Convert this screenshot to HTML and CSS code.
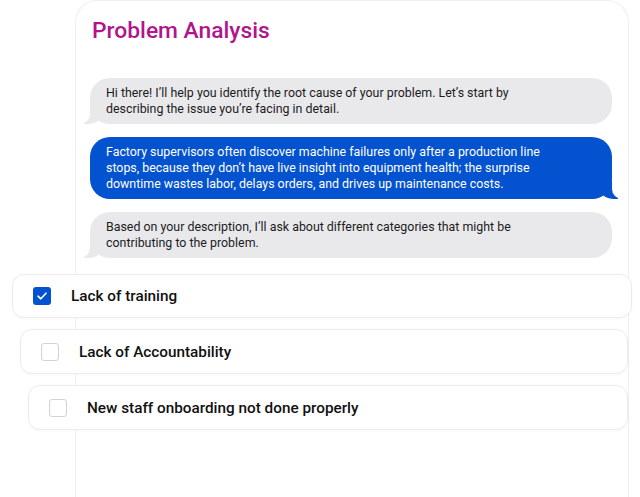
FILE: index.html
```html
<!DOCTYPE html>
<html lang="en">
<head>
<meta charset="utf-8">
<title>Problem Analysis</title>
<link rel="stylesheet" href="styles.css">
</head>
<body>
<main class="card">
  <h1 class="title">Problem Analysis</h1>
  <section class="chat">
    <p class="bubble bubble-in">Hi there! I’ll help you identify the root cause of your problem. Let’s start by describing the issue you’re facing in detail.</p>
    <p class="bubble bubble-out">Factory supervisors often discover machine failures only after a production line stops, because they don’t have live insight into equipment health; the surprise downtime wastes labor, delays orders, and drives up maintenance costs.</p>
    <p class="bubble bubble-in">Based on your description, I’ll ask about different categories that might be contributing to the problem.</p>
  </section>
  <ul class="options">
    <li class="option option-1">
      <span class="check checked"><svg viewBox="0 0 18 18" width="18" height="18"><path d="M5 9.2 L7.8 11.8 L13 6.2" fill="none" stroke="#fff" stroke-width="1.6" stroke-linecap="round" stroke-linejoin="round"/></svg></span>
      <span class="label">Lack of training</span>
    </li>
    <li class="option option-2">
      <span class="check"></span>
      <span class="label">Lack of Accountability</span>
    </li>
    <li class="option option-3">
      <span class="check"></span>
      <span class="label">New staff onboarding not done properly</span>
    </li>
  </ul>
</main>
</body>
</html>
```

FILE: styles.css
```css
* { box-sizing: border-box; }
html, body { margin: 0; padding: 0; background: #ffffff; }
body { width: 640px; height: 497px; overflow: hidden; font-family: Roboto, "Liberation Sans", sans-serif; }

.card {
  margin-left: 75px;
  width: 554px;
  min-height: 497px;
  border: 1px solid #efefef;
  border-bottom: none;
  border-radius: 22px 22px 0 0;
  padding: 17px 16px 0 14px;
  background: #ffffff;
}

.title {
  margin: 0 0 0 2px;
  font-family: Roboto, "Liberation Sans", sans-serif;
  font-weight: 500;
  font-size: 22.8px;
  line-height: 26px;
  color: #b0158c;
}

.chat {
  margin-top: 34px;
  display: flex;
  flex-direction: column;
  gap: 13px;
}

.bubble {
  position: relative;
  margin: 0;
  padding: 7px 56px 7px 16px;
  border-radius: 20px;
  font-size: 12.4px;
  line-height: 16px;
}

.bubble-in { background: #e9e9eb; color: #1c1c1e; }
.bubble-out { background: #0352cf; color: #ffffff; }

.bubble::before, .bubble::after {
  content: "";
  position: absolute;
  bottom: 0;
  height: 18px;
}
.bubble-in::before {
  left: -6px;
  width: 20px;
  background: #e9e9eb;
  border-bottom-right-radius: 15px;
}
.bubble-in::after {
  left: -10px;
  width: 10px;
  background: #ffffff;
  border-bottom-right-radius: 10px;
}
.bubble-out::before {
  right: -6px;
  width: 20px;
  background: #0352cf;
  border-bottom-left-radius: 15px;
}
.bubble-out::after {
  right: -10px;
  width: 10px;
  background: #ffffff;
  border-bottom-left-radius: 10px;
}

.options {
  list-style: none;
  margin: 16px 0 0;
  padding: 0;
  display: flex;
  flex-direction: column;
  gap: 11px;
}

.option {
  display: flex;
  align-items: center;
  gap: 20px;
  height: 45px;
  padding-left: 20px;
  background: #ffffff;
  border: 1px solid #ececec;
  border-radius: 12px;
  box-shadow: 0 1px 3px rgba(0, 0, 0, 0.03);
}
.option-1 { margin-left: -78px; margin-right: -20px; height: 44px; }
.option-2 { margin-left: -70px; margin-right: -16px; }
.option-3 { margin-left: -62px; margin-right: -16px; }

.check {
  flex: none;
  width: 18px;
  height: 18px;
  border: 1.5px solid #d4d4d4;
  border-radius: 3px;
  background: #ffffff;
  display: flex;
}
.check.checked {
  border: none;
  background: #0352cf;
}

.label {
  font-size: 15.3px;
  font-weight: 500;
  color: #111111;
}
```
